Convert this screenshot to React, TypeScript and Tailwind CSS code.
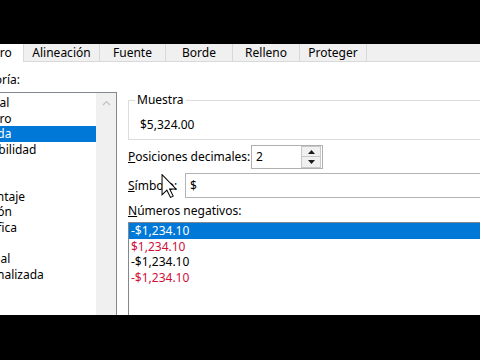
import React from "react";

const Tab = ({ label, w, active = false }: { label: string; w: string; active?: boolean }) => (
  <div
    className={
      active
        ? `${w} h-[18px] shrink-0 bg-white border-r border-[#d9d9d9] flex items-center justify-center`
        : `${w} h-[18px] shrink-0 bg-[#f0f0f0] border-r border-b border-[#d9d9d9] flex items-center justify-center`
    }
  >
    {label}
  </div>
);

const categories = [
  "General",
  "Número",
  "Moneda",
  "Contabilidad",
  "Fecha",
  "Hora",
  "Porcentaje",
  "Fracción",
  "Científica",
  "Texto",
  "Especial",
  "Personalizada",
];

const negatives: { t: string; red: boolean }[] = [
  { t: "-$1,234.10", red: false },
  { t: "$1,234.10", red: true },
  { t: "-$1,234.10", red: false },
  { t: "-$1,234.10", red: true },
];

export default function App() {
  return (
    <div className="w-[480px] h-[360px] bg-black overflow-hidden flex flex-col font-['Noto_Sans',sans-serif] text-[12px] text-black">
      <div className="h-[44px] shrink-0" />
      <div className="h-[271px] shrink-0 bg-white overflow-hidden relative flex flex-col">
        {/* tabs */}
        <div className="h-[18px] shrink-0 flex ml-[-46px] w-[560px] leading-none">
          <Tab label="Número" w="w-[70px]" active />
          <Tab label="Alineación" w="w-[76px]" />
          <Tab label="Fuente" w="w-[66px]" />
          <Tab label="Borde" w="w-[67px]" />
          <Tab label="Relleno" w="w-[67px]" />
          <Tab label="Proteger" w="w-[67px]" />
          <div className="flex-1 h-[18px] bg-[#f0f0f0] border-b border-[#d9d9d9]" />
        </div>

        {/* content */}
        <div className="flex-1 flex ml-[-39px] w-[580px] min-h-0">
          {/* left column */}
          <div className="w-[156px] shrink-0 flex flex-col pt-[10px]">
            <div className="h-[16px] leading-[16px] pl-[1px]">
              <span className="underline">C</span>ategoría:
            </div>
            <div className="mt-[4px] flex-1 border-l border-t border-r border-[#828790] flex min-h-0">
              <div className="flex-1 flex flex-col pt-[2px]">
                {categories.map((c, i) => (
                  <div
                    key={c}
                    className={
                      i === 2
                        ? "h-[15.6px] leading-[15.6px] pl-[3px] bg-[#0078d7] text-white"
                        : "h-[15.6px] leading-[15.6px] pl-[3px]"
                    }
                  >
                    {c}
                  </div>
                ))}
              </div>
              <div className="w-[20px] shrink-0 bg-[#f0f0f0] flex flex-col items-center pt-[7px]">
                <svg width="9" height="6" viewBox="0 0 9 6">
                  <path d="M1 5 L4.5 1.5 L8 5" fill="none" stroke="#c2c2c2" strokeWidth="1.2" />
                </svg>
              </div>
            </div>
          </div>

          {/* right column */}
          <div className="ml-[11px] flex-1 flex flex-col min-w-0">
            {/* Muestra group */}
            <div className="mt-[38px] h-[40px] shrink-0 border border-[#dcdcdc] relative pl-[11px] pt-[16px]">
              <div className="absolute top-[-9px] left-[6px] bg-white px-[2px] leading-[16px]">Muestra</div>
              <div className="leading-[16px]">$5,324.00</div>
            </div>

            {/* Posiciones decimales */}
            <div className="mt-[5px] flex items-center h-[24px] shrink-0">
              <div className="w-[123px] shrink-0 leading-[16px]">
                <span className="underline">P</span>osiciones decimales:
              </div>
              <div className="w-[72px] h-[24px] border border-[#b0b0b0] flex items-center bg-white">
                <div className="flex-1 pl-[4px] leading-[16px]">2</div>
                <div className="w-[20px] h-[22px] flex flex-col mr-[1px]">
                  <div className="h-[11px] border border-[#c8c8c8] bg-[#f0f0f0] flex items-center justify-center">
                    <svg width="7" height="4" viewBox="0 0 7 4">
                      <path d="M0 4 L3.5 0 L7 4 Z" fill="#1a1a1a" />
                    </svg>
                  </div>
                  <div className="h-[11px] border border-t-0 border-[#c8c8c8] bg-[#f0f0f0] flex items-center justify-center">
                    <svg width="7" height="4" viewBox="0 0 7 4">
                      <path d="M0 0 L3.5 4 L7 0 Z" fill="#1a1a1a" />
                    </svg>
                  </div>
                </div>
              </div>
            </div>

            {/* Símbolo */}
            <div className="mt-[4px] flex items-center h-[25px] shrink-0">
              <div className="w-[57px] shrink-0 leading-[16px]">
                <span className="underline">S</span>ímbolo:
              </div>
              <div className="flex-1 h-[25px] border border-[#b4b4b4] flex items-center pl-[4px] leading-[16px]">$</div>
            </div>

            {/* Números negativos */}
            <div className="mt-[5px] h-[16px] leading-[16px] shrink-0">
              <span className="underline">N</span>úmeros negativos:
            </div>
            <div className="mt-[3px] flex-1 border-l border-t border-[#828790] flex flex-col min-h-0">
              {negatives.map((n, i) => (
                <div
                  key={i}
                  className={
                    i === 0
                      ? "h-[15.6px] leading-[15.6px] pl-[2px] bg-[#0078d7] text-white"
                      : n.red
                      ? "h-[15.6px] leading-[15.6px] pl-[2px] text-[#d0103a]"
                      : "h-[15.6px] leading-[15.6px] pl-[2px]"
                  }
                >
                  {n.t}
                </div>
              ))}
            </div>
          </div>
        </div>

        {/* mouse cursor */}
        <svg
          className="absolute left-[161px] top-[130px]"
          width="16"
          height="24"
          viewBox="0 0 12 19"
        >
          <path
            d="M0.5 0.5 L0.5 16.5 L4.3 12.8 L7.2 18.5 L9.3 17.5 L6.5 11.8 L11.5 11.8 Z"
            fill="#ffffff"
            stroke="#000000"
            strokeWidth="0.8"
            strokeLinejoin="miter"
          />
        </svg>
      </div>
    </div>
  );
}
